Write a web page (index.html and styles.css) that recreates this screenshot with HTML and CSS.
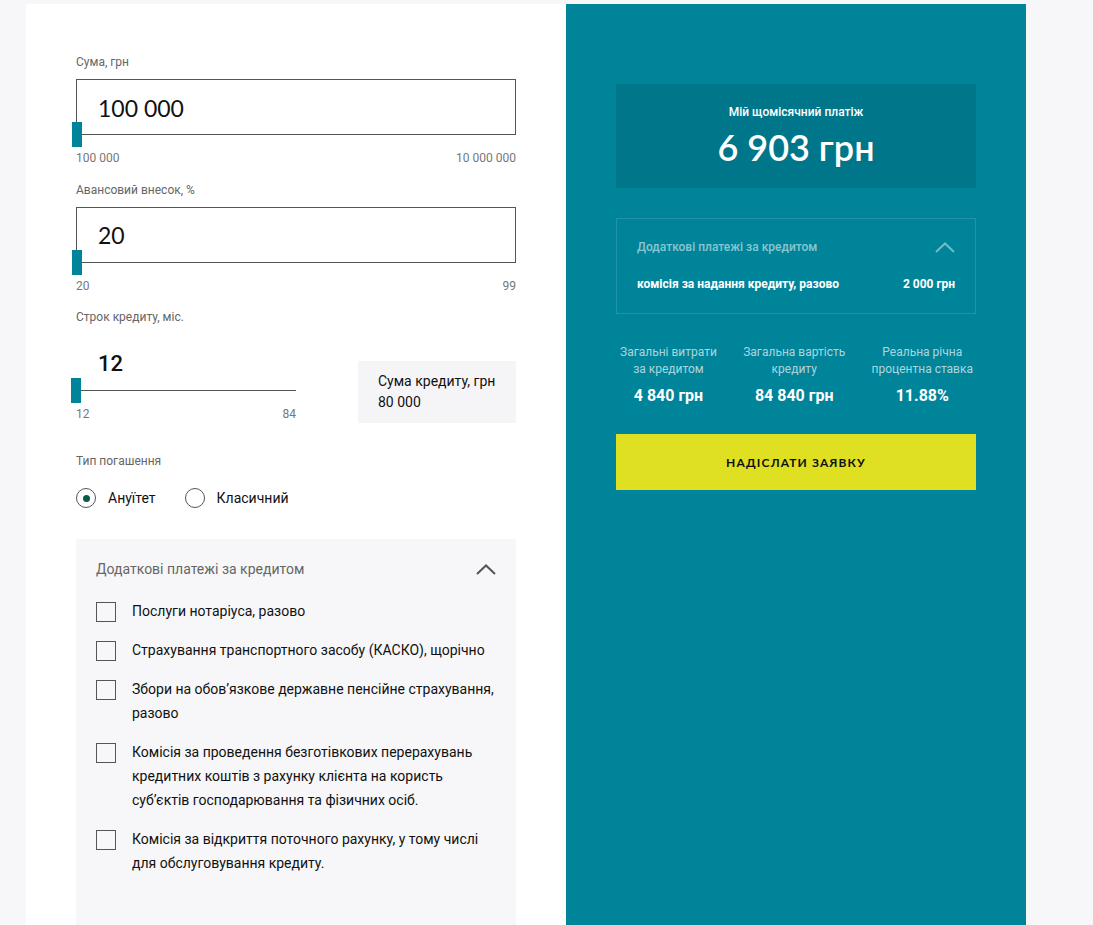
FILE: index.html
```html
<!DOCTYPE html>
<html lang="uk">
<head>
<meta charset="utf-8">
<title>Кредитний калькулятор</title>
<link rel="stylesheet" href="styles.css">
</head>
<body>
<div class="page">
  <section class="calc">
    <div class="field">
      <div class="field-label">Сума, грн</div>
      <div class="input-box">
        <span class="input-value">100 000</span>
        <span class="thumb"></span>
      </div>
      <div class="range-labels"><span>100 000</span><span>10 000 000</span></div>
    </div>

    <div class="field">
      <div class="field-label">Авансовий внесок, %</div>
      <div class="input-box">
        <span class="input-value">20</span>
        <span class="thumb"></span>
      </div>
      <div class="range-labels"><span>20</span><span>99</span></div>
    </div>

    <div class="field">
      <div class="field-label">Строк кредиту, міс.</div>
      <div class="term-row">
        <div class="term-slider">
          <div class="term-value">12</div>
          <div class="term-track"><span class="thumb"></span></div>
          <div class="range-labels"><span>12</span><span>84</span></div>
        </div>
        <div class="credit-sum">
          <div>Сума кредиту, грн</div>
          <div>80 000</div>
        </div>
      </div>
    </div>

    <div class="repay">
      <div class="field-label">Тип погашення</div>
      <div class="radios">
        <label class="radio"><span class="radio-circle checked"></span><span>Ануїтет</span></label>
        <label class="radio"><span class="radio-circle"></span><span>Класичний</span></label>
      </div>
    </div>

    <div class="extras">
      <div class="extras-head">
        <span>Додаткові платежі за кредитом</span>
        <svg class="chev" width="20" height="11" viewBox="0 0 20 11"><path d="M1 10 L10 1.5 L19 10" fill="none" stroke="#555" stroke-width="2"/></svg>
      </div>
      <ul class="checks">
        <li><span class="box"></span><span>Послуги нотаріуса, разово</span></li>
        <li><span class="box"></span><span>Страхування транспортного засобу (КАСКО), щорічно</span></li>
        <li><span class="box"></span><span>Збори на обов’язкове державне пенсійне страхування, разово</span></li>
        <li><span class="box"></span><span>Комісія за проведення безготівкових перерахувань кредитних коштів з рахунку клієнта на користь суб’єктів господарювання та фізичних осіб.</span></li>
        <li><span class="box"></span><span>Комісія за відкриття поточного рахунку, у тому числі для обслуговування кредиту.</span></li>
      </ul>
    </div>
  </section>

  <aside class="summary">
    <div class="monthly">
      <div class="monthly-label">Мій щомісячний платіж</div>
      <div class="monthly-value">6 903 грн</div>
    </div>

    <div class="fees">
      <div class="fees-head">
        <span>Додаткові платежі за кредитом</span>
        <svg class="chev" width="20" height="11" viewBox="0 0 20 11"><path d="M1 10 L10 1.5 L19 10" fill="none" stroke="rgba(255,255,255,0.45)" stroke-width="2"/></svg>
      </div>
      <div class="fees-row"><span>комісія за надання кредиту, разово</span><span>2 000 грн</span></div>
    </div>

    <div class="stats">
      <div class="stat">
        <div class="stat-label">Загальні витрати<br>за кредитом</div>
        <div class="stat-value">4 840 грн</div>
      </div>
      <div class="stat">
        <div class="stat-label">Загальна вартість<br>кредиту</div>
        <div class="stat-value">84 840 грн</div>
      </div>
      <div class="stat">
        <div class="stat-label">Реальна річна<br>процентна ставка</div>
        <div class="stat-value">11.88%</div>
      </div>
    </div>

    <button class="submit">НАДІСЛАТИ ЗАЯВКУ</button>
  </aside>
</div>
</body>
</html>
```

FILE: styles.css
```css
* { box-sizing: border-box; }

html, body {
  margin: 0;
  background: #f7f7f9;
  font-family: Roboto, "Noto Sans", sans-serif;
  color: #111;
}

.page {
  display: flex;
  width: 1000px;
  margin: 4px 0 0 26px;
  min-height: 921px;
}

/* left column */
.calc {
  width: 540px;
  background: #fff;
  padding: 51px 50px 60px;
}

.field { margin-bottom: 17.5px; }

.field-label {
  font-size: 12px;
  line-height: 14px;
  color: #666;
}

.input-box {
  position: relative;
  margin-top: 10px;
  height: 56px;
  border: 1px solid #555;
  display: flex;
  align-items: center;
  padding-left: 21px;
}

.input-value {
  font-family: Lato, "Open Sans", sans-serif;
  font-size: 23px;
  color: #111;
  padding-top: 1px;
}

.thumb {
  position: absolute;
  width: 10px;
  height: 25px;
  background: #00849a;
  left: -5px;
  bottom: -13px;
}

.range-labels {
  display: flex;
  justify-content: space-between;
  margin-top: 16px;
  font-size: 12px;
  line-height: 14px;
  color: #777;
}

.term-row {
  display: flex;
  justify-content: space-between;
  align-items: flex-start;
  margin-top: 25px;
}

.term-slider { width: 220px; padding-top: 2px; }

.term-value {
  font-size: 22px;
  line-height: 26px;
  font-weight: 500;
  padding-left: 22px;
}

.term-track {
  position: relative;
  margin-top: 13px;
  height: 1px;
  background: #555;
}
.term-track .thumb { bottom: -12px; }

.term-slider .range-labels { margin-top: 16px; }

.credit-sum {
  width: 158px;
  margin-top: 12px;
  background: #f5f5f7;
  padding: 10px 20px 10px;
  font-size: 14px;
  line-height: 21px;
  color: #111;
}

.repay { margin-top: 31px; }

.radios {
  display: flex;
  gap: 29px;
  margin-top: 20px;
}

.radio {
  display: flex;
  align-items: center;
  gap: 12px;
  font-size: 14px;
  line-height: 20px;
}

.radio-circle {
  width: 20px;
  height: 20px;
  border: 1px solid #555;
  border-radius: 50%;
  display: flex;
  align-items: center;
  justify-content: center;
}
.radio-circle.checked::after {
  content: "";
  width: 7px;
  height: 7px;
  border-radius: 50%;
  background: #0b5a48;
}

.extras {
  margin-top: 31px;
  background: #f7f7f9;
  padding: 20px 20px 60px;
}

.extras-head {
  display: flex;
  justify-content: space-between;
  align-items: center;
  font-size: 14px;
  line-height: 20px;
  color: #666;
}

.checks {
  list-style: none;
  margin: 20px 0 0;
  padding: 0;
  display: flex;
  flex-direction: column;
  gap: 15px;
}

.checks li {
  display: flex;
  gap: 16px;
  font-size: 14px;
  line-height: 24px;
  color: #111;
}

.box {
  flex: none;
  width: 20px;
  height: 20px;
  margin-top: 3px;
  border: 1px solid #555;
}

/* right column */
.summary {
  width: 460px;
  background: #00849a;
  padding: 80px 50px;
  color: #fff;
}

.monthly {
  background: #00768b;
  text-align: center;
  padding: 21px 0 21px;
}

.monthly-label {
  font-size: 12px;
  line-height: 14px;
  font-weight: 500;
}

.monthly-value {
  margin-top: 8px;
  font-family: Lato, "Open Sans", sans-serif;
  font-size: 36px;
  line-height: 40px;
  font-weight: 600;
}

.fees {
  margin-top: 30px;
  border: 1px solid rgba(255,255,255,0.13);
  padding: 21px 20px 22px;
}

.fees-head {
  display: flex;
  justify-content: space-between;
  align-items: center;
  font-size: 12px;
  line-height: 14px;
  font-weight: 500;
  color: rgba(255,255,255,0.55);
}

.fees-row {
  display: flex;
  justify-content: space-between;
  margin-top: 23px;
  font-size: 12px;
  line-height: 14px;
  font-weight: 700;
}

.stats {
  display: flex;
  justify-content: space-between;
  margin-top: 30px;
  padding: 0 3px 0 4px;
  text-align: center;
}

.stat-label {
  font-size: 12px;
  line-height: 17px;
  color: rgba(255,255,255,0.68);
}

.stat-value {
  margin-top: 8px;
  font-size: 16px;
  line-height: 20px;
  font-weight: 700;
}

.submit {
  display: block;
  width: 100%;
  height: 56px;
  margin-top: 28px;
  border: 0;
  background: #dfe021;
  color: #111;
  font-family: Lato, "Open Sans", sans-serif;
  font-size: 12px;
  font-weight: 700;
  letter-spacing: 1.1px;
}
```
